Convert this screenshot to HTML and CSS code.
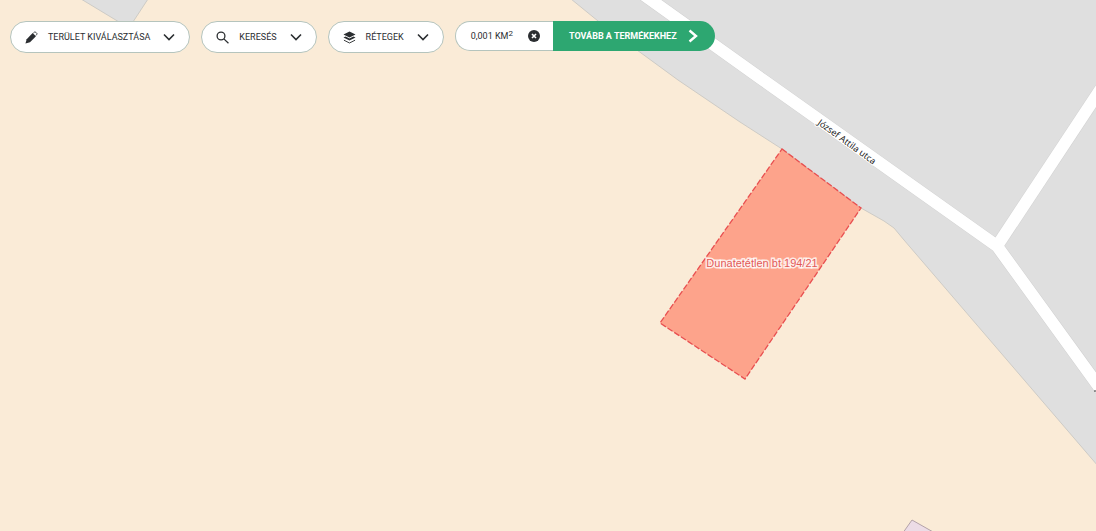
FILE: index.html
```html
<!DOCTYPE html>
<html lang="hu">
<head>
<meta charset="utf-8">
<title>Dunatetétlen bt 194/21</title>
<meta name="viewport" content="width=device-width, initial-scale=1">
<link rel="stylesheet" href="styles.css">
</head>
<body>
<svg class="map" viewBox="0 0 1096 531" preserveAspectRatio="xMidYMid slice" role="img" aria-label="József Attila utca">
  <g class="residential">
    <path d="M571 -1 L598 21 L637 50 L678 80 L740 122 L782 149 L861 208 L884 221 L894 228 L904 240 L1098 466 L1098 -1 Z"/>
    <path d="M81 -1 L129 28 L148 -1 Z"/>
  </g>
  <g class="road-casing">
    <path d="M637 -10 L763 80 L997 246 L1110 402"/>
    <path d="M997 246 L1110 75"/>
  </g>
  <g class="road">
    <path d="M637 -10 L763 80 L997 246 L1110 402"/>
    <path d="M997 246 L1110 75"/>
  </g>
  <path class="building" d="M912 520 L942 537 L900 537 Z"/>
  <path class="label-edge" d="M1094 391 L1098 391"/>
  <text class="street" transform="translate(817 124) rotate(36)">József Attila utca</text>
  <path class="parcel" d="M782 149 L861 208 L745 379 L660 323 Z"/>
  <text class="parcel-name" x="762" y="267">Dunatetétlen bt 194/21</text>
</svg>

<nav class="toolbar">
  <button class="pill" type="button">
    <svg class="icon" viewBox="0 0 14 14" aria-hidden="true"><path fill="currentColor" d="M.5 13.500 L1.800 8.800 L8.200 2.200 L11.800 5.600 L5.400 12 Z"/><path fill="none" stroke="currentColor" d="M9 2.200 L10.200 1.200 Q11 .8 11.600 1.400 L12.700 2.500 Q13.200 3.100 12.600 3.800 L11.800 4.800"/></svg>
    <span>TERÜLET KIVÁLASZTÁSA</span>
    <svg class="chevron" viewBox="0 0 12 12" aria-hidden="true"><path d="M1 3.500 L6 8.500 L11 3.500"/></svg>
  </button>
  <button class="pill" type="button">
    <svg class="icon" viewBox="0 0 14 14" aria-hidden="true"><g fill="none" stroke="currentColor" stroke-width="1.400"><circle cx="5.400" cy="5.400" r="4.200"/><path d="M8.500 8.500 L13.400 13.200"/></g></svg>
    <span>KERESÉS</span>
    <svg class="chevron" viewBox="0 0 12 12" aria-hidden="true"><path d="M1 3.500 L6 8.500 L11 3.500"/></svg>
  </button>
  <button class="pill" type="button">
    <svg class="icon" viewBox="0 0 14 14" aria-hidden="true"><path fill="currentColor" d="M7 .6 L13.500 3.800 L7 7 L.5 3.800 Z M.5 7 L2.800 5.900 L7 8 L11.200 5.900 L13.500 7 L7 10.200 Z"/><path fill="none" stroke="currentColor" d="M1 9.900 L7 12.900 L13 9.900"/></svg>
    <span>RÉTEGEK</span>
    <svg class="chevron" viewBox="0 0 12 12" aria-hidden="true"><path d="M1 3.500 L6 8.500 L11 3.500"/></svg>
  </button>
  <div class="selection">
    <div class="area">
      <span>0,001 KM<sup>2</sup></span>
      <button class="clear" type="button" aria-label="Törlés">
        <svg viewBox="0 0 12 12" aria-hidden="true"><circle cx="6" cy="6" r="6" fill="currentColor"/><path stroke="#fff" stroke-width="1.600" d="M4 4 L8 8 M8 4 L4 8"/></svg>
      </button>
    </div>
    <button class="next" type="button">
      <span>TOVÁBB A TERMÉKEKHEZ</span>
      <svg class="arrow" viewBox="0 0 14 14" aria-hidden="true"><path d="M3.500 1.500 L10 7 L3.500 12.500"/></svg>
    </button>
  </div>
</nav>
</body>
</html>
```
FILE: styles.css
```css
* {
  box-sizing: border-box;
}

body {
  margin: 0;
  min-height: 100vh;
  overflow: hidden;
  background: #faebd7;
  color: #2b2e31;
  font-family: Roboto, "Liberation Sans", sans-serif;
}

.map {
  position: absolute;
  inset: 0;
  width: 100%;
  height: 100%;
  background: #faebd7;
}

.residential {
  fill: #dfdfdf;
  stroke: #cdcbc6;
}

.road-casing,
.road {
  fill: none;
  stroke-linejoin: round;
}

.road-casing {
  stroke: #d0d0d0;
  stroke-width: 13px;
}

.road {
  stroke: #fff;
  stroke-width: 12px;
}

.building {
  fill: #ecdce6;
  stroke: #b3a2a8;
}

.label-edge {
  stroke: #333;
}

.street {
  fill: #222;
  stroke: #fff;
  stroke-width: 2px;
  paint-order: stroke;
  font: 9px "Noto Sans", sans-serif;
}

.parcel {
  fill: tomato;
  fill-opacity: 0.53;
  stroke: #e84f50;
  stroke-width: 1.3;
  stroke-dasharray: 6 2;
}

.parcel-name {
  fill: #e25b59;
  stroke: #fff;
  stroke-opacity: 0.8;
  stroke-width: 3px;
  paint-order: stroke;
  text-anchor: middle;
  font: 11px "Liberation Sans", Arial, sans-serif;
}

.toolbar {
  position: relative;
  display: flex;
  flex-wrap: wrap;
  align-items: flex-start;
  gap: 11px;
  padding: 21px 10px;
}

button {
  border: 0;
  margin: 0;
  color: inherit;
  font: inherit;
  cursor: pointer;
}

.pill,
.area,
.next {
  display: flex;
  align-items: center;
  font-size: 9px;
  line-height: 14px;
  white-space: nowrap;
}

.pill {
  gap: 10px;
  height: 32px;
  padding: 0 14px;
  border: 1px solid #b5c4bd;
  border-radius: 16px;
  background: #fff;
}

.icon {
  width: 13px;
  height: 13px;
}

.chevron {
  width: 12px;
  height: 12px;
  margin-left: 3px;
}

.chevron path,
.arrow path {
  fill: none;
  stroke: currentColor;
  stroke-width: 1.6px;
}

.selection {
  display: flex;
  height: 30px;
}

.area {
  gap: 15px;
  padding: 0 13px 0 15px;
  border: 1px solid #b5c4bd;
  border-right: 0;
  border-radius: 15px 0 0 15px;
  background: #fff;
}

sup {
  font-size: 8px;
  line-height: 0;
  vertical-align: 3px;
}

.clear {
  display: flex;
  padding: 0;
  background: none;
}

.clear svg {
  width: 12px;
  height: 12px;
}

.next {
  gap: 9px;
  padding: 0 15px 0 16px;
  border-radius: 0 15px 15px 0;
  background: #2da771;
  color: #fff;
  font-weight: 700;
}

.arrow {
  width: 14px;
  height: 14px;
}

.arrow path {
  stroke-width: 2.4px;
}
```
